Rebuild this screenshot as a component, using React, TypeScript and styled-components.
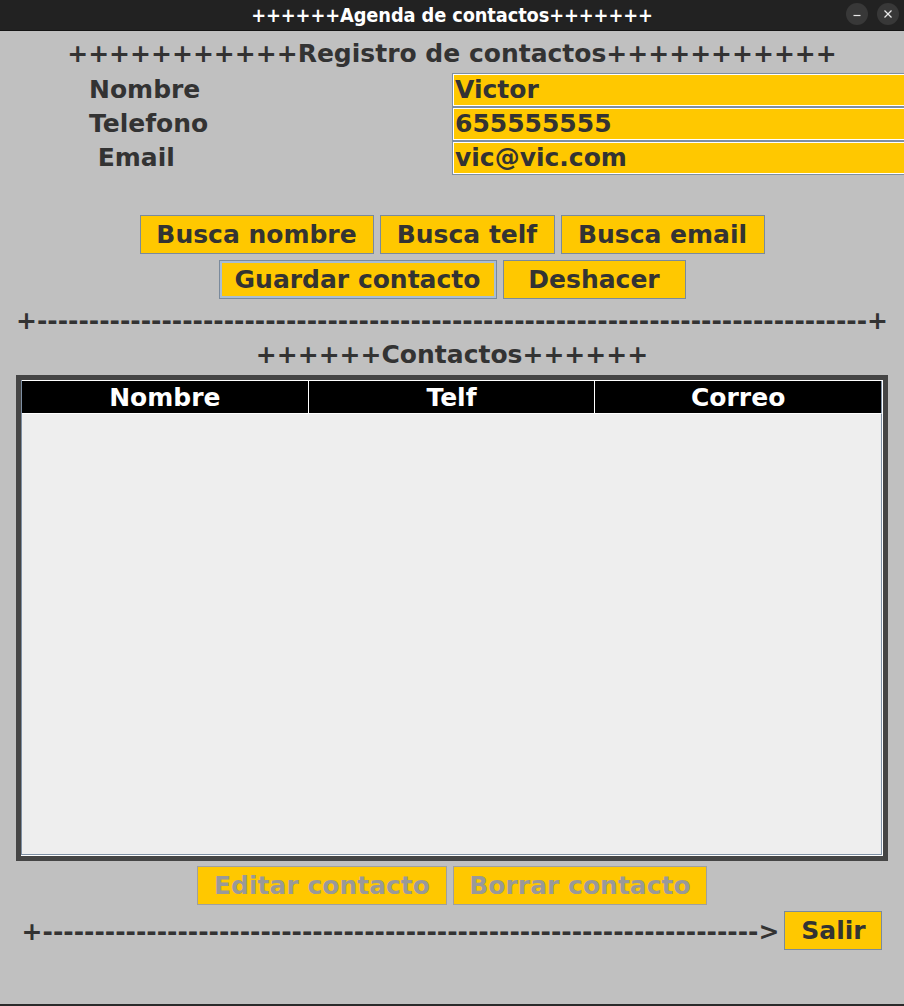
import React from "react";
import styled, { createGlobalStyle } from "styled-components";

const Global = createGlobalStyle`
  html, body { margin: 0; padding: 0; }
  body {
    background: #c0c0c0;
    font-family: "DejaVu Sans", "Liberation Sans", sans-serif;
    overflow: hidden;
  }
`;

const FS = "25px";

const Window = styled.div`
  width: 904px;
  height: 1006px;
  box-sizing: border-box;
  display: flex;
  flex-direction: column;
  background: #c0c0c0;
  border-bottom: 2px solid #2a2a2a;
  overflow: hidden;
`;

const TitleBar = styled.div`
  height: 31px;
  flex: none;
  background: #222222;
  border-bottom: 1px solid #141414;
  box-sizing: border-box;
  position: relative;
  display: flex;
  align-items: center;
  justify-content: center;
`;

const TitleText = styled.div`
  color: #ffffff;
  font-family: "DejaVu Sans Condensed", "DejaVu Sans", sans-serif;
  font-weight: bold;
  font-size: 19.8px;
  letter-spacing: -0.1px;
`;

const WinControls = styled.div`
  position: absolute;
  right: 5px;
  top: 3px;
  display: flex;
  gap: 9px;
`;

const WinButton = styled.div`
  width: 22px;
  height: 22px;
  border-radius: 50%;
  background: #383838;
  color: #e8e8e8;
  display: flex;
  align-items: center;
  justify-content: center;
`;

const Content = styled.div`
  display: flex;
  flex-direction: column;
  align-items: center;
  padding-top: 8px;
`;

const Text25 = styled.div`
  font-family: "DejaVu Sans", sans-serif;
  font-weight: bold;
  font-size: ${FS};
  line-height: 29px;
  color: #333333;
  white-space: pre;
`;

const Heading = styled(Text25)<{ $mt?: number }>`
  margin-top: ${(p) => p.$mt ?? 0}px;
  text-align: center;
`;

const Form = styled.div`
  align-self: stretch;
  margin-top: 5px;
  display: grid;
  grid-template-columns: 363px 460px;
  padding-left: 89px;
`;

const Label = styled(Text25)`
  height: 34px;
  line-height: 34px;
`;

const Field = styled.div`
  height: 34px;
  box-sizing: border-box;
  background: #ffc800;
  border: 1px solid #7e8fa3;
  box-shadow: inset 1px 1px 0 #ffffff, inset -1px -1px 0 #ffffff;
  padding-left: 2px;
  font-family: "DejaVu Sans", sans-serif;
  font-weight: bold;
  font-size: ${FS};
  line-height: 31px;
  color: #333333;
`;

const ButtonRow = styled.div<{ $mt: number }>`
  display: flex;
  gap: 6px;
  justify-content: center;
  margin-top: ${(p) => p.$mt}px;
`;

const Button = styled.div<{ $disabled?: boolean; $focused?: boolean; $w?: number }>`
  height: 39px;
  box-sizing: border-box;
  padding: 0 10px;
  ${(p) => (p.$w ? `width: ${p.$w}px;` : "")}
  display: flex;
  align-items: center;
  justify-content: center;
  background: #ffc800;
  border: 1px solid ${(p) => (p.$disabled ? "#a0a0a0" : "#7a8a9c")};
  box-shadow: ${(p) => (p.$focused ? "inset 0 0 0 2px #a9bdd2" : "none")};
  font-family: "DejaVu Sans", sans-serif;
  font-weight: bold;
  font-size: ${FS};
  color: ${(p) => (p.$disabled ? "#999999" : "#333333")};
  white-space: pre;
`;

const TableFrame = styled.div`
  margin-top: 6px;
  width: 872px;
  height: 486px;
  box-sizing: border-box;
  border: 5px solid #454545;
  background: #ffffff;
  display: flex;
  flex-direction: column;
`;

const Viewport = styled.div`
  flex: 1;
  display: flex;
  flex-direction: column;
  border-left: 1px solid #7e8fa3;
  border-bottom: 1px solid #7e8fa3;
  margin: 0 1px 1px 0;
  background: #eeeeee;
`;

const HeaderRow = styled.div`
  height: 33px;
  flex: none;
  display: grid;
  grid-template-columns: 1fr 1fr 1fr;
  background: #000000;
  border-top: 1px solid #ffffff;
  box-sizing: border-box;
`;

const HeaderCell = styled.div<{ $last?: boolean }>`
  color: #ffffff;
  font-family: "DejaVu Sans", sans-serif;
  font-weight: bold;
  font-size: ${FS};
  line-height: 33px;
  text-align: center;
  border-right: 1px solid ${(p) => (p.$last ? "#7e8fa3" : "#ffffff")};
`;

const TableBody = styled.div`
  flex: 1;
  background: #eeeeee;
  border-top: 1px solid #ffffff;
  border-right: 1px solid #7e8fa3;
`;

const BottomRow = styled.div`
  margin-top: 6px;
  display: flex;
  align-items: center;
  gap: 5px;
`;

const Dashes = styled(Text25)`
  margin-top: 2px;
`;

export default function App() {
  const sep = "+" + "-".repeat(80) + "+";
  const arrow = "+" + "-".repeat(69) + ">";
  return (
    <>
      <Global />
      <Window>
        <TitleBar>
          <TitleText>++++++Agenda de contactos+++++++</TitleText>
          <WinControls>
            <WinButton>
              <svg width="10" height="10" viewBox="0 0 10 10">
                <line x1="1.5" y1="6.5" x2="8.5" y2="6.5" stroke="#e8e8e8" strokeWidth="1.2" />
              </svg>
            </WinButton>
            <WinButton>
              <svg width="10" height="10" viewBox="0 0 10 10">
                <line x1="1.5" y1="1.5" x2="8.5" y2="8.5" stroke="#e8e8e8" strokeWidth="1.3" />
                <line x1="8.5" y1="1.5" x2="1.5" y2="8.5" stroke="#e8e8e8" strokeWidth="1.3" />
              </svg>
            </WinButton>
          </WinControls>
        </TitleBar>
        <Content>
          <Heading>+++++++++++Registro de contactos+++++++++++</Heading>
          <Form>
            <Label>Nombre</Label>
            <Field>Victor</Field>
            <Label>Telefono</Label>
            <Field>655555555</Field>
            <Label> Email</Label>
            <Field>vic@vic.com</Field>
          </Form>
          <ButtonRow $mt={40}>
            <Button $w={234}>Busca nombre</Button>
            <Button $w={175}>Busca telf</Button>
            <Button $w={204}>Busca email</Button>
          </ButtonRow>
          <ButtonRow $mt={6}>
            <Button $focused $w={278}>Guardar contacto</Button>
            <Button $w={183}>Deshacer</Button>
          </ButtonRow>
          <Heading $mt={7}>{sep}</Heading>
          <Heading $mt={5}>++++++Contactos++++++</Heading>
          <TableFrame>
            <Viewport>
              <HeaderRow>
                <HeaderCell>Nombre</HeaderCell>
                <HeaderCell>Telf</HeaderCell>
                <HeaderCell $last>Correo</HeaderCell>
              </HeaderRow>
              <TableBody />
            </Viewport>
          </TableFrame>
          <ButtonRow $mt={5}>
            <Button $disabled $w={250}>Editar contacto</Button>
            <Button $disabled $w={254}>Borrar contacto</Button>
          </ButtonRow>
          <BottomRow>
            <Dashes>{arrow}</Dashes>
            <Button $w={98}>Salir</Button>
          </BottomRow>
        </Content>
      </Window>
    </>
  );
}
